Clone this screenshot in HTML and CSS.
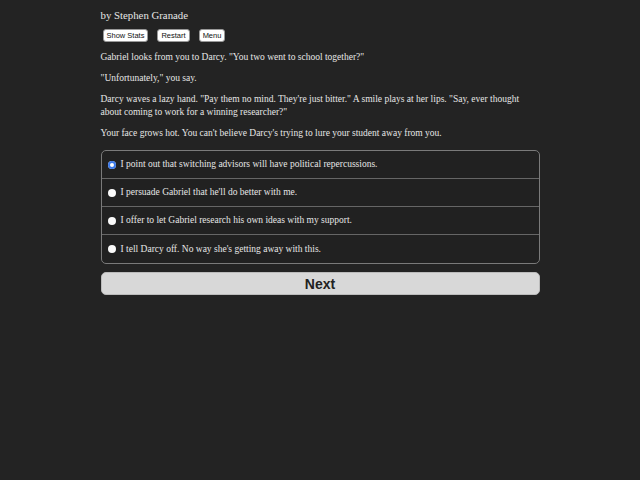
FILE: index.html
```html
<!DOCTYPE html>
<html lang="en">
<head>
<meta charset="utf-8">
<title>Chapter</title>
<link rel="stylesheet" href="styles.css">
</head>
<body>
<div class="container">
  <div class="header">
    <p class="author">by Stephen Granade</p>
    <div class="buttons">
      <button class="small-btn">Show Stats</button>
      <button class="small-btn">Restart</button>
      <button class="small-btn">Menu</button>
    </div>
  </div>
  <div class="text">
    <p>Gabriel looks from you to Darcy. "You two went to school together?"</p>
    <p>"Unfortunately," you say.</p>
    <p>Darcy waves a lazy hand. "Pay them no mind. They're just bitter." A smile plays at her lips. "Say, ever thought about coming to work for a winning researcher?"</p>
    <p>Your face grows hot. You can't believe Darcy's trying to lure your student away from you.</p>
  </div>
  <form class="choice-form">
    <div class="choices">
      <label class="choice"><span class="radio checked"></span>I point out that switching advisors will have political repercussions.</label>
      <label class="choice"><span class="radio"></span>I persuade Gabriel that he'll do better with me.</label>
      <label class="choice"><span class="radio"></span>I offer to let Gabriel research his own ideas with my support.</label>
      <label class="choice"><span class="radio"></span>I tell Darcy off. No way she's getting away with this.</label>
    </div>
    <button type="button" class="next">Next</button>
  </form>
</div>
</body>
</html>
```

FILE: styles.css
```css
html, body {
  margin: 0;
  padding: 0;
  background: #232323;
}

body {
  color: #e6e6e6;
  font-family: "Liberation Serif", serif;
  font-size: 9.5px;
  line-height: 13px;
}

.container {
  width: 439px;
  margin: 0 auto;
  padding-top: 8px;
}

.author {
  margin: 0;
  font-size: 10.8px;
  line-height: 14px;
}

.buttons {
  display: flex;
  gap: 9px;
  margin: 7px 0 0 2px;
}

.small-btn {
  font-family: "Liberation Sans", sans-serif;
  font-size: 7.5px;
  line-height: 9px;
  padding: 1px 3px;
  background: #ffffff;
  color: #111;
  border: 1px solid #999;
  border-radius: 3px;
}

.text {
  margin-top: 9px;
}

.text p {
  margin: 0 0 8px 0;
}

.choice-form {
  margin-top: 10px;
}

.choices {
  border: 1px solid #7a7a7a;
  border-radius: 5px;
  overflow: hidden;
  background: #212121;
}

.choice {
  display: flex;
  align-items: center;
  height: 27px;
  padding-left: 6px;
  border-top: 1px solid #666;
}

.choice:first-child {
  border-top: none;
}

.choice:last-child {
  height: 28px;
}

.radio {
  width: 8px;
  height: 8px;
  border-radius: 50%;
  background: #fafafa;
  margin-right: 5px;
  flex: none;
}

.radio.checked {
  background: #fff;
  box-shadow: inset 0 0 0 2px #3b78e7;
}

.next {
  display: block;
  width: 100%;
  height: 23px;
  margin-top: 8px;
  background: #d8d8d8;
  border: 1px solid #bbb;
  border-radius: 5px;
  font-family: "Liberation Sans", sans-serif;
  font-weight: bold;
  font-size: 14px;
  color: #222;
}
```
